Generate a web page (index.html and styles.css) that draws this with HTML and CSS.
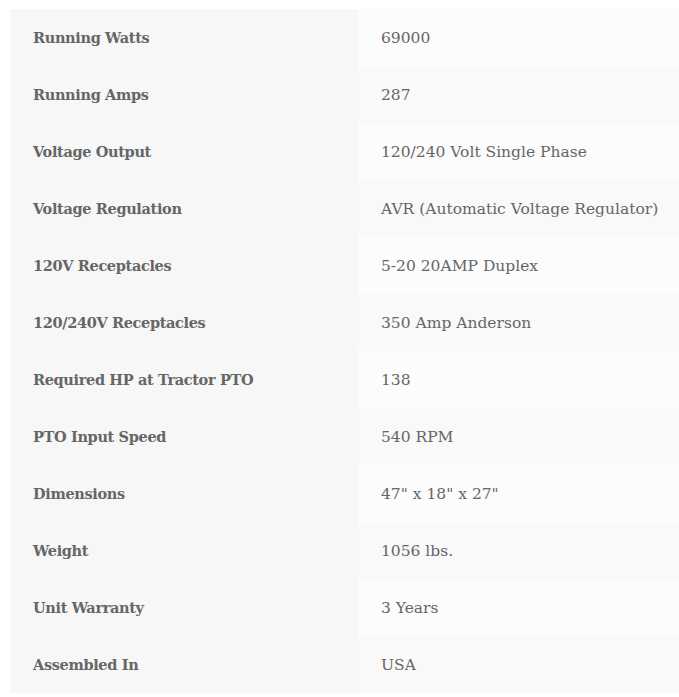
FILE: index.html
```html
<!DOCTYPE html>
<html>
<head>
<meta charset="utf-8">
<link rel="stylesheet" href="styles.css">
</head>
<body>
<table class="specs">
  <tbody>
    <tr><th>Running Watts</th><td>69000</td></tr>
    <tr><th>Running Amps</th><td>287</td></tr>
    <tr><th>Voltage Output</th><td>120/240 Volt Single Phase</td></tr>
    <tr><th>Voltage Regulation</th><td>AVR (Automatic Voltage Regulator)</td></tr>
    <tr><th>120V Receptacles</th><td>5-20 20AMP Duplex</td></tr>
    <tr><th>120/240V Receptacles</th><td>350 Amp Anderson</td></tr>
    <tr><th>Required HP at Tractor PTO</th><td>138</td></tr>
    <tr><th>PTO Input Speed</th><td>540 RPM</td></tr>
    <tr><th>Dimensions</th><td>47" x 18" x 27"</td></tr>
    <tr><th>Weight</th><td>1056 lbs.</td></tr>
    <tr><th>Unit Warranty</th><td>3 Years</td></tr>
    <tr><th>Assembled In</th><td>USA</td></tr>
  </tbody>
</table>
</body>
</html>
```

FILE: styles.css
```css
html, body {
  margin: 0;
  padding: 0;
  background: #ffffff;
}
body {
  padding: 9px 0 0 10px;
  font-family: "DejaVu Serif", "Liberation Serif", serif;
  color: #666666;
}
.specs {
  border-collapse: collapse;
  width: 669px;
  table-layout: fixed;
}
.specs tr {
  height: 57px;
}
.specs th {
  width: 348px;
  box-sizing: border-box;
  background: #f7f7f7;
  text-align: left;
  font-weight: bold;
  font-size: 14.5px;
  letter-spacing: -0.35px;
  padding: 0 0 0 23px;
  color: #666666;
}
.specs td {
  box-sizing: border-box;
  background: #fcfcfc;
  font-size: 15.5px;
  padding: 0 0 0 23px;
}
.specs tr:nth-child(even) td {
  background: #f9f9f9;
}
```
